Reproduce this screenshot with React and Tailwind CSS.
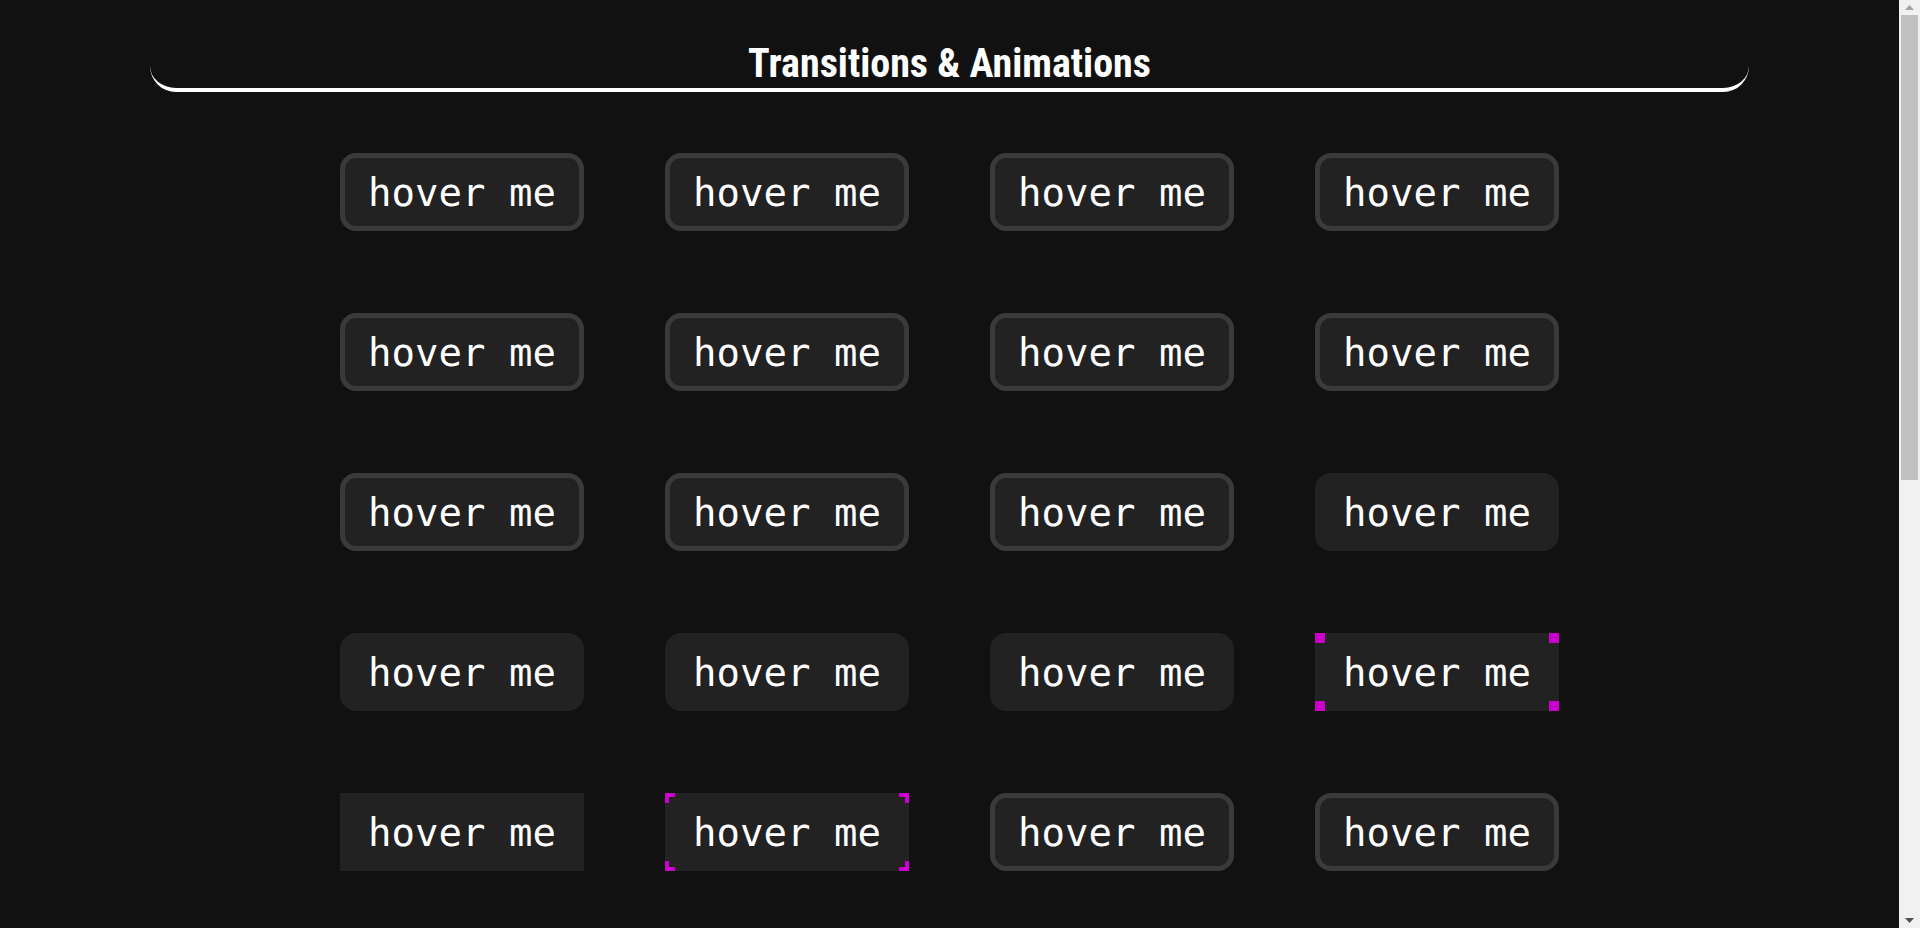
import React from "react";

const MONO = { fontFamily: '"DejaVu Sans Mono", monospace' };

function Dots() {
  return (
    <>
      <span className="absolute left-0 top-0 h-[10px] w-[10px] bg-[#cc00cc]" />
      <span className="absolute right-0 top-0 h-[10px] w-[10px] bg-[#cc00cc]" />
      <span className="absolute left-0 bottom-0 h-[10px] w-[10px] bg-[#cc00cc]" />
      <span className="absolute right-0 bottom-0 h-[10px] w-[10px] bg-[#cc00cc]" />
    </>
  );
}

function Brackets() {
  return (
    <>
      <span className="absolute left-0 top-0 h-[10px] w-[10px] border-l-4 border-t-4 border-solid border-[#cc00cc]" />
      <span className="absolute right-0 top-0 h-[10px] w-[10px] border-r-4 border-t-4 border-solid border-[#cc00cc]" />
      <span className="absolute left-0 bottom-0 h-[10px] w-[10px] border-l-4 border-b-4 border-solid border-[#cc00cc]" />
      <span className="absolute right-0 bottom-0 h-[10px] w-[10px] border-r-4 border-b-4 border-solid border-[#cc00cc]" />
    </>
  );
}

function HoverButton({ kind }) {
  let cls =
    "relative flex h-[78px] w-[244px] shrink-0 items-center justify-center bg-[#222222] pt-[2px] text-[39px] text-white ";
  if (kind === "border") cls += "border-[5px] border-[#3a3a3a] rounded-2xl";
  else if (kind === "plain") cls += "border-[5px] border-transparent rounded-2xl";
  else cls += "border-0 rounded-none";
  return (
    <button type="button" className={cls} style={MONO}>
      <span className="whitespace-pre leading-normal">hover me</span>
      {kind === "dots" && <Dots />}
      {kind === "brackets" && <Brackets />}
    </button>
  );
}

const rows = [
  ["border", "border", "border", "border"],
  ["border", "border", "border", "border"],
  ["border", "border", "border", "plain"],
  ["plain", "plain", "plain", "dots"],
  ["square", "brackets", "border", "border"],
  ["border", "border", "border", "border"],
];

function Scrollbar() {
  return (
    <div className="flex h-full w-[21px] shrink-0 flex-col bg-[#f1f1f1]">
      <div className="flex h-[15px] items-center justify-center">
        <svg width="9" height="5" viewBox="0 0 9 5">
          <path d="M4.5 0 L9 5 L0 5 Z" fill="#a3a3a3" />
        </svg>
      </div>
      <div className="h-[465px] px-[2px]">
        <div className="h-full bg-[#c1c1c1]" />
      </div>
      <div className="flex-1" />
      <div className="flex h-[15px] items-center justify-center">
        <svg width="9" height="5" viewBox="0 0 9 5">
          <path d="M0 0 L9 0 L4.5 5 Z" fill="#505050" />
        </svg>
      </div>
    </div>
  );
}

export default function App() {
  return (
    <div className="flex h-screen overflow-hidden bg-[#111111]">
      <div className="min-w-0 flex-1">
        <header className="mx-[150px] rounded-b-[26px] border-b-4 border-white pt-[44px] pb-[4px] text-center">
          <h1
            className="text-[40px] font-bold leading-[40px] text-white"
            style={{ fontFamily: '"Roboto Condensed", Roboto, "Noto Sans", sans-serif' }}
          >
            Transitions &amp; Animations
          </h1>
        </header>
        <main className="mx-auto mt-[61px] grid w-[1219px] grid-cols-[repeat(4,244px)] gap-x-[81px] gap-y-[82px]">
          {rows.flat().map((k, i) => (
            <HoverButton key={i} kind={k} />
          ))}
        </main>
      </div>
      <Scrollbar />
    </div>
  );
}
